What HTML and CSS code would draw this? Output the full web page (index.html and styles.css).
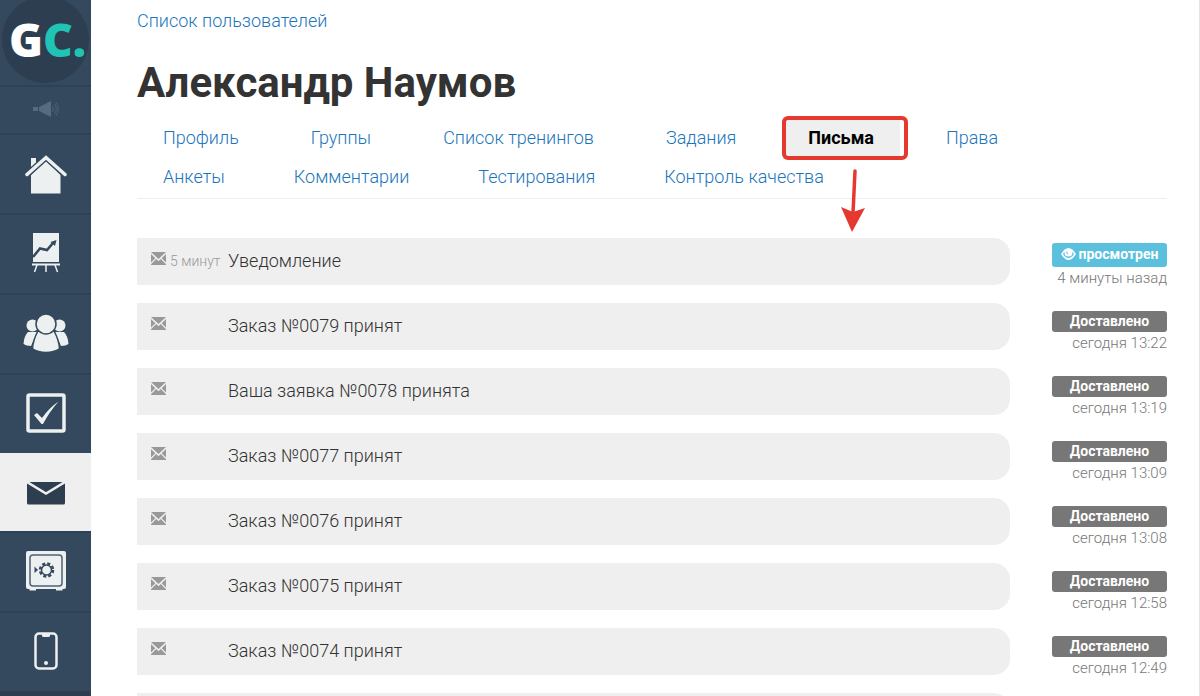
FILE: index.html
```html
<!DOCTYPE html>
<html lang="ru">
<head>
<meta charset="utf-8">
<title>Александр Наумов</title>
<link rel="stylesheet" href="styles.css">
</head>
<body>
<svg class="sprite" aria-hidden="true">
  <symbol id="letter" viewBox="0 0 15 13">
    <path d="M0 0H15L7.500 7Z"/>
    <path d="M0 2L4.300 6.200L0 10.500Z"/>
    <path d="M15 2L10.700 6.200L15 10.500Z"/>
    <path d="M0 13V12.200L5.200 7.100L7.500 9.200L9.800 7.100L15 12.200V13Z"/>
  </symbol>
</svg>
<div class="page">
  <nav class="sidebar" aria-label="Главное меню">
    <a class="logo" href="#"><span class="logo-disc"><span>G</span><span class="logo-c">C.</span></span></a>
    <a class="side-item side-news" href="#" aria-label="Новости">
      <svg width="26" height="18" viewBox="0 0 26 18"><path d="M0 7h5v4H0zM6 7L18 1V17L6 11Z" fill="#566a80"/><path d="M19.500 6q2 3 0 6M21.500 4q3.500 5 0 10M23 2.500q4.500 6.500 0 13" fill="none" stroke="#4d6278" stroke-width="1"/></svg>
    </a>
    <a class="side-item" href="#" aria-label="Главная">
      <svg width="42" height="44" viewBox="0 -4 42 44"><path d="M6 3h5v5l-5 5z" fill="#ecf0f1"/><path d="M6 20L21 6L35.500 20V38.500H6Z" fill="#ecf0f1"/><path d="M2 19.500L21 2.500L40 19.500" fill="none" stroke="#34495e" stroke-width="6"/><path d="M2 19.500L21 2.500L40 19.500" fill="none" stroke="#ecf0f1" stroke-width="3.500" stroke-linecap="round"/></svg>
    </a>
    <a class="side-item" href="#" aria-label="Трафик">
      <svg width="30" height="40" viewBox="0 0 30 40"><path d="M2 0H28V29H2ZM1 30.500H29V32.500H1Z" fill="#ecf0f1"/><path d="M6 32L3.500 39M15 32V39M24 32L26.500 39" stroke="#ecf0f1" stroke-width="1.500"/><path d="M2 24L9 15.500L16 17L22 10" fill="none" stroke="#34495e" stroke-width="2.500"/><path d="M19.500 9L25.500 7L24 13Z" fill="#34495e"/></svg>
    </a>
    <a class="side-item" href="#" aria-label="Пользователи">
      <svg width="46" height="40" viewBox="0 0 46 40"><g fill="#ecf0f1"><circle cx="9.500" cy="12.500" r="6"/><circle cx="36.500" cy="12.500" r="6"/><path d="M5 19H14L8 33Q3 33 .500 31Q1 23 5 19ZM41 19H32L38 33Q43 33 45.500 31Q45 23 41 19Z"/></g><g fill="#ecf0f1" stroke="#34495e" stroke-width="1.500"><path d="M15 18H31Q36 27 36.500 36Q31 39.500 23 39.500T9.500 36Q10 27 15 18Z"/><circle cx="23" cy="11" r="10"/></g></svg>
    </a>
    <a class="side-item" href="#" aria-label="Задачи">
      <svg width="40" height="40" viewBox="0 0 40 40"><rect x="2" y="2" width="36" height="36" rx="1.500" fill="none" stroke="#ecf0f1" stroke-width="3.500"/><path d="M8 22L11 20L16 25Q23 15 32.500 8.500Q24 18 17 31H15.500Z" fill="#ecf0f1"/></svg>
    </a>
    <a class="side-item is-active" href="#" aria-label="Сообщения" aria-current="page">
      <svg width="38" height="24" viewBox="0 0 38 24"><rect y="1" width="38" height="22.500" rx="1.500" fill="#2c3e50"/><path d="M0 1L19 12.500L38 1" fill="none" stroke="#efefef" stroke-width="2.500"/></svg>
    </a>
    <a class="side-item" href="#" aria-label="Продажи">
      <svg width="40" height="40" viewBox="0 0 40 40"><path d="M2 0H38Q40 0 40 2V36Q40 38 38 38H36.500V39.500H30V38H10V39.500H3.500V38H2Q0 38 0 36V2Q0 0 2 0Z" fill="#ecf0f1"/><rect x="4" y="4" width="32" height="31" rx="3" fill="none" stroke="#4f6275" stroke-width="1.500"/><circle cx="20.500" cy="19" r="5" fill="none" stroke="#34495e" stroke-width="1.500"/><circle cx="20.500" cy="19" r="6.500" fill="none" stroke="#34495e" stroke-width="2.500" stroke-dasharray="3 2.100"/><path d="M8.500 15.500L12 19L8.500 22Z" fill="#34495e"/></svg>
    </a>
    <a class="side-item" href="#" aria-label="Мобильное приложение">
      <svg width="24" height="38" viewBox="0 0 24 38"><rect x="1.500" y="1.500" width="21" height="35" rx="3.500" fill="none" stroke="#ecf0f1" stroke-width="2.500"/><path d="M8 2h8v1.500q0 1.500-1.500 1.500h-5Q8 5 8 3.500Z" fill="#ecf0f1"/><circle cx="12" cy="31" r="2" fill="#ecf0f1"/></svg>
    </a>
    <div class="side-rest"></div>
  </nav>

  <main class="content">
    <a class="back" href="#">Список пользователей</a>
    <h1>Александр Наумов</h1>
    <nav class="tabs" aria-label="Разделы пользователя">
      <div class="tab-row">
        <a href="#">Профиль</a>
        <a href="#">Группы</a>
        <a href="#">Список тренингов</a>
        <a href="#">Задания</a>
        <a class="current" href="#" aria-current="page">Письма
          <span class="marker"></span>
          <svg class="arrow" width="24" height="63" viewBox="0 0 24 63" aria-hidden="true"><path d="M14 2L12 44" stroke="#e5392f" stroke-width="3.500" stroke-linecap="round"/><path d="M0 38L12 43L24 39L11 63Z" fill="#e5392f"/></svg>
        </a>
        <a href="#">Права</a>
      </div>
      <div class="tab-row">
        <a href="#">Анкеты</a>
        <a href="#">Комментарии</a>
        <a href="#">Тестирования</a>
        <a href="#">Контроль качества</a>
      </div>
    </nav>

    <ul class="mails">
      <li class="mail"><a class="bar" href="#"><span class="when"><svg class="ico"><use href="#letter"/></svg>5 минут</span><span>Уведомление</span></a>
        <div class="state"><span class="badge seen"><svg width="15" height="12" viewBox="0 0 15 12" aria-hidden="true"><path d="M0 6Q7.500-6 15 6Q7.500 18 0 6Z" fill="#fff"/><path d="M3.500 3.500Q1 6 3.500 8Q7.500 12 11.500 8Q14 6 11.500 3.500Q12 8.500 7.500 8.500T3.500 3.500Z" fill="#5bc0de"/><path d="M6 3.500Q5 5.500 7 6" stroke="#5bc0de" fill="none"/></svg>просмотрен</span><time>4 минуты назад</time></div></li>
      <li class="mail"><a class="bar" href="#"><span class="when"><svg class="ico"><use href="#letter"/></svg></span><span>Заказ №0079 принят</span></a>
        <div class="state"><span class="badge">Доставлено</span><time>сегодня 13:22</time></div></li>
      <li class="mail"><a class="bar" href="#"><span class="when"><svg class="ico"><use href="#letter"/></svg></span><span>Ваша заявка №0078 принята</span></a>
        <div class="state"><span class="badge">Доставлено</span><time>сегодня 13:19</time></div></li>
      <li class="mail"><a class="bar" href="#"><span class="when"><svg class="ico"><use href="#letter"/></svg></span><span>Заказ №0077 принят</span></a>
        <div class="state"><span class="badge">Доставлено</span><time>сегодня 13:09</time></div></li>
      <li class="mail"><a class="bar" href="#"><span class="when"><svg class="ico"><use href="#letter"/></svg></span><span>Заказ №0076 принят</span></a>
        <div class="state"><span class="badge">Доставлено</span><time>сегодня 13:08</time></div></li>
      <li class="mail"><a class="bar" href="#"><span class="when"><svg class="ico"><use href="#letter"/></svg></span><span>Заказ №0075 принят</span></a>
        <div class="state"><span class="badge">Доставлено</span><time>сегодня 12:58</time></div></li>
      <li class="mail"><a class="bar" href="#"><span class="when"><svg class="ico"><use href="#letter"/></svg></span><span>Заказ №0074 принят</span></a>
        <div class="state"><span class="badge">Доставлено</span><time>сегодня 12:49</time></div></li>
      <li class="mail"><a class="bar" href="#" aria-label="Письмо"></a></li>
    </ul>
  </main>
</div>
</body>
</html>
```
FILE: styles.css
```css
* { box-sizing: border-box; }
body {
  margin: 0;
  background: #fff;
  color: #333;
  font-family: Roboto, "Open Sans", sans-serif;
  font-size: 18px;
  font-weight: 300;
  line-height: 24px;
}
a { color: #1b75bb; text-decoration: none; }
.sprite { position: absolute; width: 0; height: 0; }
.page {
  display: flex;
  height: 100vh;
  overflow: hidden;
  border-right: 1px solid #e4e4e4;
}

.sidebar {
  display: flex;
  flex: none;
  flex-direction: column;
  width: 91px;
  background: #34495e;
}
.logo {
  display: flex;
  flex: none;
  justify-content: center;
  height: 85px;
  overflow: hidden;
}
.logo-disc {
  display: flex;
  flex: none;
  align-items: center;
  justify-content: center;
  width: 87px;
  height: 87px;
  margin-top: -4px;
  padding: 0 0 2px 4px;
  border-radius: 50%;
  background: #2c3e50;
  color: #fff;
  font: 800 46px/60px "Open Sans", sans-serif;
}
.logo-c { color: #1fc4b4; }
.side-item {
  display: flex;
  flex: none;
  align-items: center;
  justify-content: center;
  height: 80px;
  padding-bottom: 3px;
  border-top: 2px solid #2e4257;
}
.side-news { height: 48px; }
.side-item.is-active {
  height: 78px;
  padding-bottom: 0;
  background: #efefef;
  border-color: #efefef;
}
.side-rest { flex: 1; background: #2c3e50; }

.content {
  flex: 1;
  min-width: 0;
  padding: 9px 32px 0 46px;
}
.back { display: block; }
h1 {
  margin: 24px 0 11px;
  color: #333;
  font-size: 42px;
  font-weight: 700;
  line-height: 52px;
}
.tabs { border-bottom: 1px solid #eee; padding-bottom: 3px; }
.tab-row { display: flex; gap: 20px; }
.tab-row a { padding: 3px 26px 0; height: 36px; line-height: 30px; }
.tab-row + .tab-row { gap: 17px; margin-top: 3px; }
.tab-row .current {
  position: relative;
  background: #efefef;
  color: #000;
  font-weight: 700;
}
.marker {
  position: absolute;
  inset: -4px -8px -4px 0;
  border: 4px solid #e5392f;
  border-radius: 6px;
}
.arrow { position: absolute; left: 59px; top: 49px; }

.mails { list-style: none; margin: 0; padding: 39px 0 0; }
.mail {
  display: grid;
  grid-template-columns: 1fr 115px;
  grid-template-rows: 47px;
  column-gap: 42px;
  margin-bottom: 18px;
}
.bar {
  display: flex;
  align-items: center;
  padding: 0 14px 2px;
  border-radius: 0 16px 16px 0;
  background: #efefef;
  color: #333;
}
.when {
  display: flex;
  align-items: center;
  gap: 4px;
  width: 77px;
  color: #999;
  font-size: 14px;
  white-space: nowrap;
}
.ico { width: 15px; height: 13px; fill: #999; flex: none; margin-bottom: 4px; }
.state {
  display: flex;
  flex-direction: column;
  padding-top: 8px;
  color: #777;
  font-size: 15px;
  line-height: 22px;
  text-align: right;
  white-space: nowrap;
}
.badge {
  display: flex;
  flex: none;
  align-items: center;
  justify-content: center;
  gap: 3px;
  height: 21px;
  padding-bottom: 2px;
  border-radius: 3px;
  background: #777;
  color: #fff;
  font-size: 14px;
  font-weight: 700;
}
.badge.seen { height: 24px; margin-top: -3px; background: #5bc0de; }
```
